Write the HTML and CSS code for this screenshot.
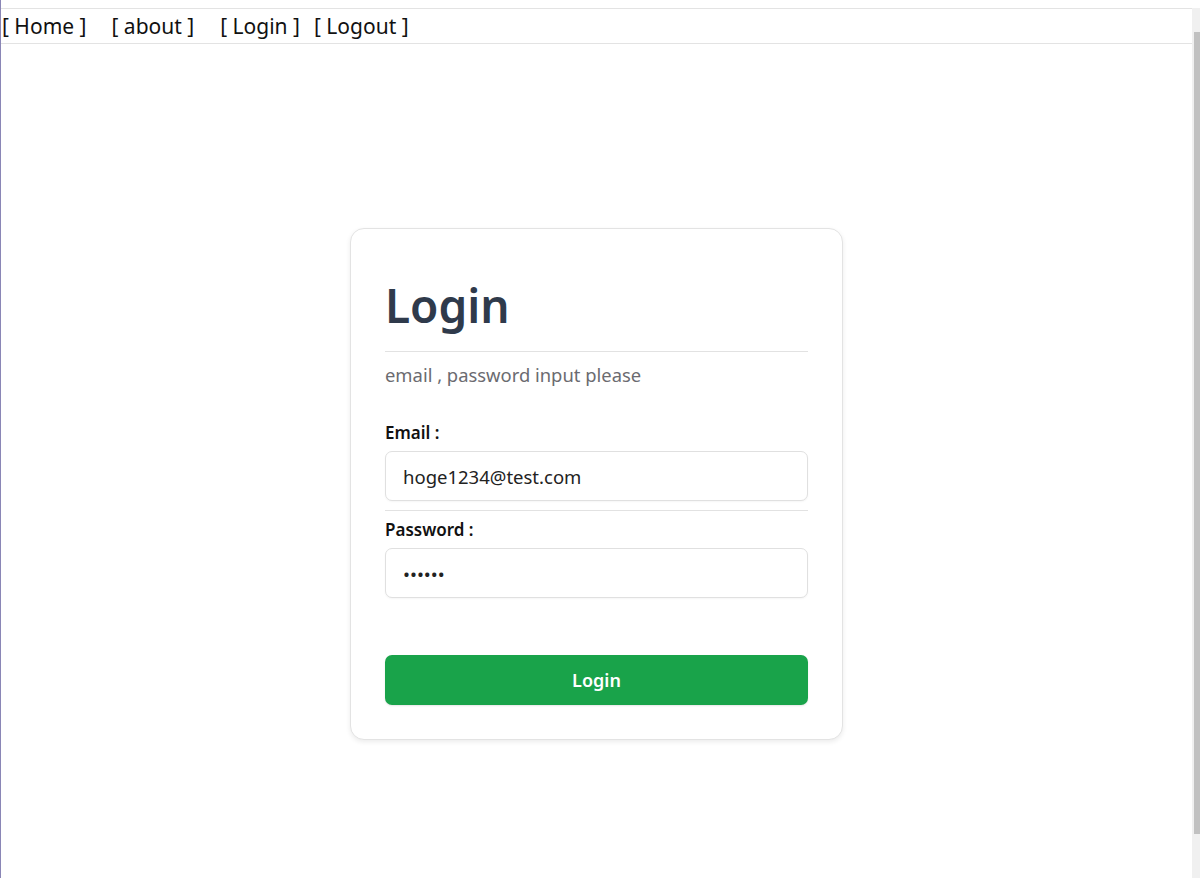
FILE: index.html
```html
<!DOCTYPE html>
<html lang="ja">
<head>
<meta charset="utf-8">
<title>Login</title>
<link rel="stylesheet" href="styles.css">
</head>
<body>
<div class="window">
  <div class="page">
    <nav class="nav">
      <a class="nav-link nav-home" href="#">[ Home ]</a>
      <a class="nav-link nav-about" href="#">[ about ]</a>
      <a class="nav-link nav-login" href="#">[ Login ]</a>
      <a class="nav-link nav-logout" href="#">[ Logout ]</a>
    </nav>
    <main class="main">
      <section class="card">
        <h1 class="title">Login</h1>
        <hr class="rule">
        <p class="subtitle">email , password input please</p>
        <form class="form">
          <label class="label" for="email">Email :</label>
          <input class="input" id="email" type="text" value="hoge1234@test.com">
          <hr class="rule rule-field">
          <label class="label" for="password">Password :</label>
          <input class="input" id="password" type="password" value="123456">
          <button class="btn" type="button">Login</button>
        </form>
      </section>
    </main>
  </div>
  <div class="scrollbar">
    <div class="scroll-arrow scroll-up"></div>
    <div class="scroll-thumb"></div>
    <div class="scroll-arrow scroll-down"></div>
  </div>
</div>
</body>
</html>
```
FILE: styles.css
```css
* { box-sizing: border-box; }
html, body { margin: 0; padding: 0; height: 100%; background: #ffffff; }
body {
  font-family: "Noto Sans", "Open Sans", "Liberation Sans", sans-serif;
  color: #1f2937;
  overflow: hidden;
}
.window {
  display: flex;
  height: 878px;
  border-left: 1px solid #8a86b6;
}
.page {
  flex: 1;
  display: flex;
  flex-direction: column;
}
.nav {
  margin-top: 8px;
  height: 36px;
  border-top: 1px solid #e3e3e3;
  border-bottom: 1px solid #e3e3e3;
  display: flex;
  align-items: center;
  padding-left: 1px;
  font-size: 21px;
  line-height: 1;
}
.nav-link {
  color: #111111;
  text-decoration: none;
  white-space: nowrap;
}
.nav-about { margin-left: 25px; }
.nav-login { margin-left: 26px; }
.nav-logout { margin-left: 14px; }
.main {
  flex: 1;
  display: flex;
  justify-content: center;
  align-items: flex-start;
  padding-top: 184px;
}
.card {
  width: 493px;
  background: #ffffff;
  border: 1px solid #e3e3e3;
  border-radius: 14px;
  box-shadow: 0 2px 5px rgba(0,0,0,0.08);
  padding: 46px 34px 34px 34px;
}
.title {
  margin: 0;
  font-size: 46px;
  line-height: 60px;
  font-weight: 600;
  color: #2f3a4b;
}
.rule {
  border: 0;
  border-top: 1px solid #e2e2e2;
  margin: 16px 0 0 0;
}
.subtitle {
  margin: 10px 0 0 0;
  font-size: 18.4px;
  line-height: 26px;
  color: #6b6b70;
}
.form {
  display: flex;
  flex-direction: column;
  margin-top: 33px;
}
.label {
  font-size: 17px;
  line-height: 24px;
  font-weight: 600;
  color: #111111;
}
.input {
  margin-top: 6px;
  height: 50px;
  border: 1px solid #e0e0e0;
  border-radius: 7px;
  padding: 0 17px;
  font-family: inherit;
  font-size: 18.5px;
  color: #222222;
  box-shadow: 0 1px 2px rgba(0,0,0,0.04);
  background: #ffffff;
}
.rule-field { margin: 9px 0 7px 0; }
.btn {
  margin-top: 57px;
  height: 50px;
  border: 0;
  border-radius: 7px;
  background: #19a34a;
  color: #ffffff;
  font-family: inherit;
  font-size: 18px;
  font-weight: 600;
  box-shadow: 0 1px 2px rgba(0,0,0,0.1);
}
.scrollbar {
  width: 8px;
  margin-top: 8px;
  background: #f0f0f0;
  display: flex;
  flex-direction: column;
  align-items: flex-end;
  padding: 0 0 0 2px;
}
.scroll-arrow {
  height: 24px;
  width: 6px;
}
.scroll-thumb {
  flex: 1;
  width: 6px;
  background: #c1c1c1;
  margin-bottom: 20px;
}
```
